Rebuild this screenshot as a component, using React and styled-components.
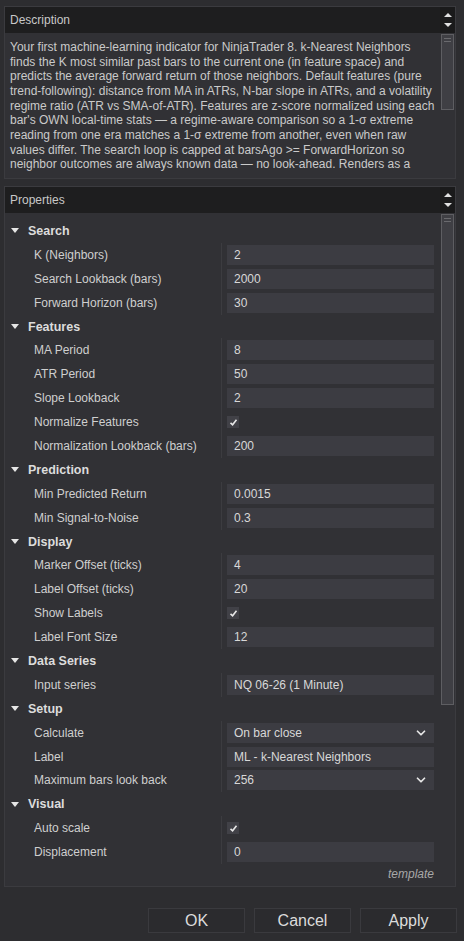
import React from "react";
import styled, { createGlobalStyle } from "styled-components";
import { ChevronDown } from "lucide-react";

const GlobalStyle = createGlobalStyle`
  html, body {
    margin: 0;
    padding: 0;
    background: #2d2d30;
  }
  body {
    font-family: "Liberation Sans", Arial, sans-serif;
    font-size: 12px;
    color: #d0d0d0;
  }
`;

const Window = styled.div`
  width: 464px;
  height: 941px;
  box-sizing: border-box;
  padding: 6px 8px 0 4px;
  display: flex;
  flex-direction: column;
`;

const Panel = styled.section`
  height: ${(p) => p.$height}px;
  margin-bottom: ${(p) => p.$gap || 0}px;
  box-sizing: border-box;
  border: 1px solid #3b3b3f;
  background: #313135;
  display: flex;
  overflow: hidden;
`;

const PanelMain = styled.div`
  flex: 1;
  min-width: 0;
  display: flex;
  flex-direction: column;
`;

const PanelHeader = styled.div`
  height: 26px;
  flex-shrink: 0;
  background: #1e1e1f;
  display: flex;
  align-items: center;
  padding-left: 5px;
  color: #c8c8c8;
`;

const DescBody = styled.div`
  flex: 1;
  overflow: hidden;
  padding: 7px 4px 0 5px;
  line-height: 14.67px;
  color: #cacaca;
  white-space: nowrap;
`;

const ScrollCol = styled.div`
  width: 15px;
  flex-shrink: 0;
  display: flex;
  flex-direction: column;
`;

const ScrollArrows = styled.div`
  height: 26px;
  background: #1a1a1b;
  display: flex;
  flex-direction: column;
  align-items: center;
  justify-content: center;
  gap: 6px;
`;

const Arrow = styled.span`
  width: 0;
  height: 0;
  border-left: 4px solid transparent;
  border-right: 4px solid transparent;
  ${(p) =>
    p.$down
      ? "border-top: 4px solid #e0e0e0;"
      : "border-bottom: 4px solid #e0e0e0;"}
`;

const ScrollTrack = styled.div`
  flex: 1;
  padding: 1px 1px 0 1px;
`;

const Thumb = styled.div`
  height: ${(p) => p.$height}px;
  box-sizing: border-box;
  border: 1px solid #5e5e62;
  background: #3f3f44;
  padding: 3px 2px 0;
  display: flex;
  flex-direction: column;
  gap: 2px;
`;

const Grip = styled.span`
  display: block;
  height: 1px;
  background: #6a6a6e;
`;

const PropBody = styled.div`
  flex: 1;
  padding: 6px 6px 0 0;
  display: flex;
  flex-direction: column;
`;

const GroupHeader = styled.div`
  height: 23.9px;
  display: flex;
  align-items: center;
  padding-left: 6px;
  gap: 9px;
  font-weight: bold;
  font-size: 12.5px;
  color: #dcdcdc;
`;

const Caret = styled.span`
  width: 0;
  height: 0;
  border-left: 4px solid transparent;
  border-right: 4px solid transparent;
  border-top: 5px solid #e6e6e6;
`;

const PropRow = styled.div`
  height: 23.9px;
  display: grid;
  grid-template-columns: 217px 1fr;
`;

const PropLabel = styled.div`
  display: flex;
  align-items: center;
  padding-left: 29px;
  border-right: 1px solid #3c3c40;
  color: #cfcfcf;
  white-space: nowrap;
`;

const PropValue = styled.div`
  display: flex;
  align-items: center;
  padding-left: 5px;
`;

const Field = styled.div`
  flex: 1;
  height: 20px;
  box-sizing: border-box;
  background: #3c3c42;
  padding: 0 6px 0 7px;
  display: flex;
  align-items: center;
  justify-content: space-between;
  color: #d8d8d8;
`;

const Check = styled.div`
  width: 12px;
  height: 12px;
  background: #414147;
  display: flex;
  align-items: center;
  justify-content: center;
`;

const TemplateNote = styled.div`
  text-align: right;
  font-style: italic;
  color: #a8a8a8;
  padding-top: 3px;
`;

const ButtonRow = styled.div`
  margin-top: 21px;
  margin-right: -1px;
  display: flex;
  justify-content: flex-end;
  gap: 9px;
`;

const Button = styled.button`
  width: 97px;
  height: 25px;
  background: #2b2b2e;
  border: 1px solid #3a3a3e;
  color: #dcdcdc;
  font-family: "Liberation Sans", Arial, sans-serif;
  font-size: 16px;
  padding: 0;
`;

const descLines = [
  "Your first machine-learning indicator for NinjaTrader 8. k-Nearest Neighbors",
  "finds the K most similar past bars to the current one (in feature space) and",
  "predicts the average forward return of those neighbors. Default features (pure",
  "trend-following): distance from MA in ATRs, N-bar slope in ATRs, and a volatility",
  "regime ratio (ATR vs SMA-of-ATR). Features are z-score normalized using each",
  "bar's OWN local-time stats \u2014 a regime-aware comparison so a 1-\u03c3 extreme",
  "reading from one era matches a 1-\u03c3 extreme from another, even when raw",
  "values differ. The search loop is capped at barsAgo >= ForwardHorizon so",
  "neighbor outcomes are always known data \u2014 no look-ahead. Renders as a",
];

const groups = [
  {
    name: "Search",
    rows: [
      ["K (Neighbors)", "2"],
      ["Search Lookback (bars)", "2000"],
      ["Forward Horizon (bars)", "30"],
    ],
  },
  {
    name: "Features",
    rows: [
      ["MA Period", "8"],
      ["ATR Period", "50"],
      ["Slope Lookback", "2"],
      ["Normalize Features", true],
      ["Normalization Lookback (bars)", "200"],
    ],
  },
  {
    name: "Prediction",
    rows: [
      ["Min Predicted Return", "0.0015"],
      ["Min Signal-to-Noise", "0.3"],
    ],
  },
  {
    name: "Display",
    rows: [
      ["Marker Offset (ticks)", "4"],
      ["Label Offset (ticks)", "20"],
      ["Show Labels", true],
      ["Label Font Size", "12"],
    ],
  },
  {
    name: "Data Series",
    rows: [["Input series", "NQ 06-26 (1 Minute)"]],
  },
  {
    name: "Setup",
    rows: [
      ["Calculate", "On bar close", "select"],
      ["Label", "ML - k-Nearest Neighbors"],
      ["Maximum bars look back", "256", "select"],
    ],
  },
  {
    name: "Visual",
    rows: [
      ["Auto scale", true],
      ["Displacement", "0"],
    ],
  },
];

function Scrollbar({ thumb }) {
  return (
    <ScrollCol>
      <ScrollArrows>
        <Arrow />
        <Arrow $down />
      </ScrollArrows>
      <ScrollTrack>
        <Thumb $height={thumb}>
          <Grip />
          <Grip />
        </Thumb>
      </ScrollTrack>
    </ScrollCol>
  );
}

function Value({ value, kind }) {
  if (value === true) {
    return (
      <Check>
        <svg width="9" height="9" viewBox="0 0 9 9">
          <path d="M1.5 4.8 L3.6 6.8 L7.5 1.8" fill="none" stroke="#e8e8e8" strokeWidth="1.6" />
        </svg>
      </Check>
    );
  }
  return (
    <Field>
      <span>{value}</span>
      {kind === "select" && <ChevronDown size={14} strokeWidth={3} color="#e6e6e6" />}
    </Field>
  );
}

export default function App() {
  return (
    <>
      <GlobalStyle />
      <Window>
        <Panel $height={173} $gap={7}>
          <PanelMain>
            <PanelHeader>Description</PanelHeader>
            <DescBody>
              {descLines.map((line) => (
                <div key={line}>{line}</div>
              ))}
            </DescBody>
          </PanelMain>
          <Scrollbar thumb={76} />
        </Panel>

        <Panel $height={701}>
          <PanelMain>
            <PanelHeader>Properties</PanelHeader>
            <PropBody>
              {groups.map((g) => (
                <React.Fragment key={g.name}>
                  <GroupHeader>
                    <Caret />
                    {g.name}
                  </GroupHeader>
                  {g.rows.map(([label, value, kind]) => (
                    <PropRow key={label}>
                      <PropLabel>{label}</PropLabel>
                      <PropValue>
                        <Value value={value} kind={kind} />
                      </PropValue>
                    </PropRow>
                  ))}
                </React.Fragment>
              ))}
              <TemplateNote>template</TemplateNote>
            </PropBody>
          </PanelMain>
          <Scrollbar thumb={491} />
        </Panel>

        <ButtonRow>
          <Button>OK</Button>
          <Button>Cancel</Button>
          <Button>Apply</Button>
        </ButtonRow>
      </Window>
    </>
  );
}
